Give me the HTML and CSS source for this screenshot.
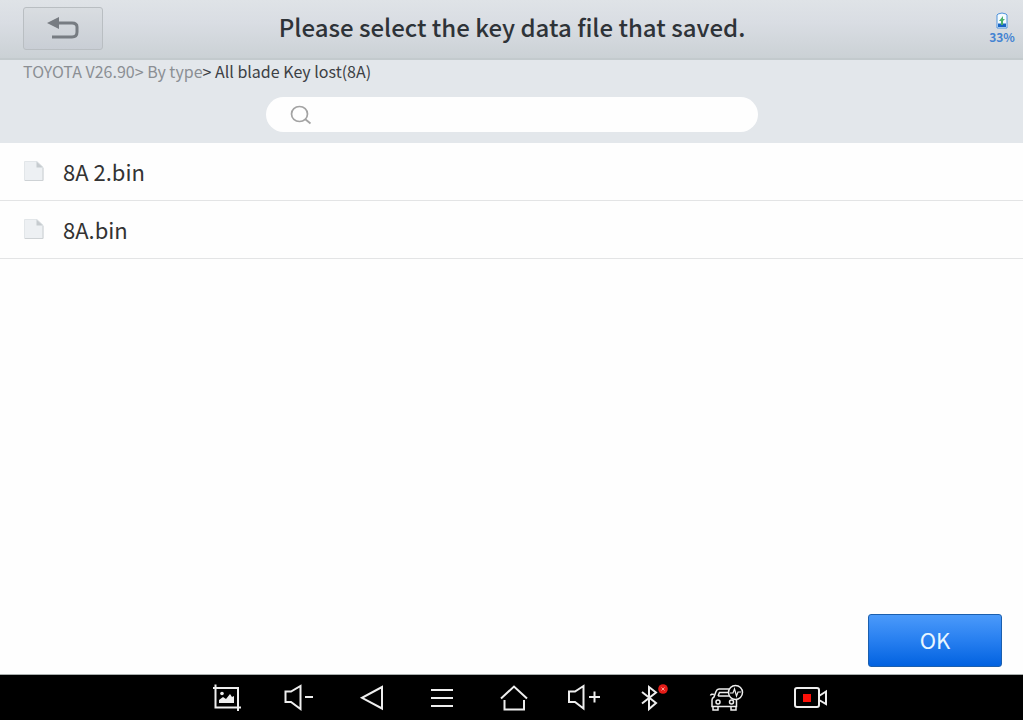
FILE: index.html
```html
<!DOCTYPE html>
<html lang="en">
<head>
<meta charset="utf-8">
<title>Select key data file</title>
<link rel="stylesheet" href="styles.css">
</head>
<body>
<div class="app">
  <header class="header">
    <button class="back" aria-label="Back">
      <svg width="34" height="26" viewBox="0 0 34 26"><path d="M12 8H26Q31 8 31 12V17Q31 22 26 22H6" fill="none" stroke="#777c82" stroke-width="3"/><path d="M1 8L13 2V14Z" fill="#777c82"/></svg>
    </button>
    <h1 class="title">Please select the key data file that saved.</h1>
    <div class="battery">
      <svg width="14" height="17" viewBox="0 0 14 17"><path d="M3 2Q7 0 11 2L12 3V16H2V3Z" fill="#f4fbff" stroke="#4f93dc"/><path d="M3 11.500h8V15H3z" fill="#1765c4"/><path d="M8 4L4 9h2v4h2V9l2-2H8z" fill="#4cb16b"/></svg>
      <span class="battery-text">33%</span>
    </div>
  </header>
  <section class="tools">
    <nav class="crumbs" aria-label="Breadcrumb"><a href="#">TOYOTA V26.90&gt; By type</a>&gt; All blade Key lost(8A)</nav>
    <label class="search">
      <svg width="22" height="20" viewBox="0 0 22 20"><ellipse cx="9.500" cy="9" rx="8" ry="7.500" fill="none" stroke="#a3a3a3" stroke-width="1.700"/><path d="M15 14l5.500 4.500" stroke="#a3a3a3" stroke-width="1.800"/></svg>
      <input class="search-input" type="text" aria-label="Search">
    </label>
  </section>
  <main class="content">
    <ul class="files">
      <li><button class="file"><svg width="20" height="20" viewBox="0 0 20 20"><path d="M.5.5H13L19 6V19.500H.5Z" fill="#edf0f3" stroke="#e2e6e9"/><path d="M1 19.500H19V7" fill="none" stroke="#ced2d5"/><path d="M12.500.5V6.500H19Z" fill="#c6cbcf"/></svg>8A 2.bin</button></li>
      <li><button class="file"><svg width="20" height="20" viewBox="0 0 20 20"><path d="M.5.5H13L19 6V19.500H.5Z" fill="#edf0f3" stroke="#e2e6e9"/><path d="M1 19.500H19V7" fill="none" stroke="#ced2d5"/><path d="M12.500.5V6.500H19Z" fill="#c6cbcf"/></svg>8A.bin</button></li>
    </ul>
    <div class="actions"><button class="ok">OK</button></div>
  </main>
  <footer class="navbar">
    <button class="nav" aria-label="Screenshot"><svg width="47" height="45" viewBox="0 0 47 45"><path d="M11.500 9.500V32.500H37M9 13H34V36" /><path d="M15 28V25l4-3 3 2 4-5 2 3 2-1v7z" fill="#eee" stroke="none"/><circle cx="18" cy="18.500" r="1.800" fill="#eee" stroke="none"/></svg></button>
    <button class="nav" aria-label="Volume down"><svg width="47" height="45" viewBox="0 0 47 45"><path d="M10.500 16.500H16L25.500 11V34L16 27H10.500ZM30 22H38"/></svg></button>
    <button class="nav" aria-label="Back"><svg width="47" height="45" viewBox="0 0 47 45"><path d="M36 12V33.500L16 22.800Z"/></svg></button>
    <button class="nav" aria-label="Menu"><svg width="47" height="45" viewBox="0 0 47 45"><path d="M14 15H36M14 23H36M14 31H36"/></svg></button>
    <button class="nav" aria-label="Home"><svg width="47" height="45" viewBox="0 0 47 45"><path d="M13 23.500L26 11.500L39 23.500M16.500 25V34.500H36V25"/></svg></button>
    <button class="nav" aria-label="Volume up"><svg width="47" height="45" viewBox="0 0 47 45"><path d="M10 16.500H16L24.500 11V33.500L16 27H10ZM30 22H41M35.500 16.500V27.500"/></svg></button>
    <button class="nav" aria-label="Bluetooth"><svg width="47" height="45" viewBox="0 0 47 45"><path d="M12 17L26 28L19 34V12L26 17.500L12 28.500"/><circle cx="33" cy="14" r="4.800" fill="#e51c18" stroke="none"/><path d="M31.500 12.500l3 3m0-3l-3 3" stroke="#ff9b93" stroke-width="1"/></svg></button>
    <button class="nav" aria-label="Vehicle diagnostics"><svg width="47" height="45" viewBox="0 0 47 45"><g stroke-width="1.500"><path d="M30 14H18Q16 14 15 16.500L13 22Q11 23 11 25V31.500H35.500V25M12 31.500V35H17V31.500M30 31.500V35H35V31.500M9.500 20.500Q10 18.500 13 19.500M17 21L18.500 17.500H27M17 21H29"/><circle cx="17" cy="27" r="2"/><circle cx="30.500" cy="27" r="2"/><circle cx="34.500" cy="17.500" r="7" fill="#000"/><path d="M29 18h3l1.500-4 2 7 1.500-4h3" stroke-width="1.200"/></g></svg></button>
    <button class="nav nav-record" aria-label="Record screen"><svg width="47" height="45" viewBox="0 0 47 45"><rect x="11" y="13" width="24" height="19" rx="2"/><path d="M35 21L42 16.500V29L35 25"/><path d="M19 19h8v8h-8z" fill="#fb1008" stroke="none"/></svg></button>
  </footer>
</div>
</body>
</html>
```
FILE: styles.css
```css
* { box-sizing: border-box; }
body {
  margin: 0;
  font-family: "Noto Sans CJK SC", "Noto Sans", sans-serif;
  color: #333;
}
button { font: inherit; color: inherit; border: 0; padding: 0; background: none; }
svg { display: block; flex: none; }
.app { display: flex; flex-direction: column; min-height: 100vh; background: #fefefe; }
.header {
  display: grid;
  grid-template-columns: 80px 1fr 80px;
  align-items: center;
  height: 60px;
  padding: 0 22px 2px 23px;
  background: linear-gradient(#dfe3e7, #d9dde3 40%, #cbd1d5);
  border-bottom: 2px solid #c3cacd;
}
.back {
  display: flex;
  align-items: center;
  justify-content: center;
  height: 43px;
  border: 1px solid #b9bec2;
  border-radius: 3px;
  background: linear-gradient(#d9dde1, #c9ced5);
}
.title { margin: 0; padding-bottom: 2px; text-align: center; font-size: 24px; line-height: 32px; font-weight: 500; color: #2e3338; }
.battery {
  display: flex;
  flex-direction: column;
  align-items: center;
  justify-self: end;
  width: 26px;
  margin-right: -14px;
}
.battery-text { font-size: 12px; line-height: 16px; font-weight: 700; color: #4483d2; }
.tools {
  display: flex;
  flex-direction: column;
  height: 83px;
  padding: 0 23px;
  background: #e3e7eb;
}
.crumbs { font-size: 16px; line-height: 22px; color: #3c4044; }
.crumbs a { color: #8b8f94; text-decoration: none; }
.search {
  display: flex;
  align-items: center;
  align-self: center;
  gap: 12px;
  width: 100%;
  max-width: 492px;
  height: 35px;
  margin-top: 15px;
  padding: 0 24px;
  border-radius: 18px;
  background: #fefefe;
}
.search-input { flex: 1; min-width: 0; border: 0; outline: 0; background: none; font: inherit; font-size: 16px; }
.content { flex: 1; display: flex; flex-direction: column; }
.files { list-style: none; margin: 0; padding: 0; }
.file {
  display: flex;
  align-items: center;
  gap: 19px;
  width: 100%;
  height: 57px;
  padding: 0 24px 2px;
  font-size: 22px;
  line-height: 32px;
  text-align: left;
}
.files li { border-bottom: 1px solid #e3e4e5; }
.actions { display: flex; justify-content: flex-end; margin-top: auto; padding: 0 21px 7px; }
.ok {
  width: 134px;
  height: 53px;
  padding-bottom: 4px;
  border: 1px solid #1b5fae;
  border-radius: 3px;
  background: linear-gradient(#4b9afa, #277ff0 50%, #0262e0);
  color: #e8f6ff;
  font-size: 22px;
  line-height: 32px;
}
.navbar {
  display: flex;
  justify-content: center;
  height: 46px;
  border-top: 1px solid #a9afae;
  background: #000;
}
.nav { display: flex; justify-content: center; width: 71px; }
.nav-record { justify-content: flex-end; }
.nav svg { fill: none; stroke: #eee; stroke-width: 2; }
```
